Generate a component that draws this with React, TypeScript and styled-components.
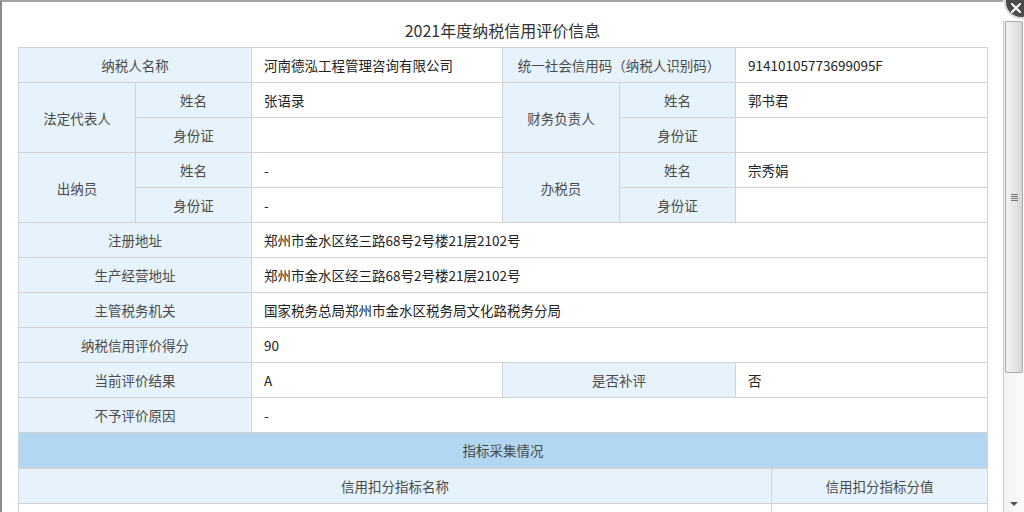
import React from 'react';
import styled, { createGlobalStyle } from 'styled-components';

const Global = createGlobalStyle`
  html, body { margin: 0; padding: 0; background: #fff; }
  body { font-family: "Noto Sans CJK SC", "Noto Sans", sans-serif; color: #333; }
  #root { width: 1024px; height: 512px; }
`;

const Page = styled.div`
  position: relative;
  display: flex;
  width: 1024px;
  height: 512px;
  overflow: hidden;
  background: #fff;
`;

const Frame = styled.div`
  width: 1003px;
  flex: none;
  box-sizing: border-box;
  border-top: 2px solid #a3a3a3;
  border-left: 2px solid #8c8c8c;
  padding-left: 16px;
`;

const Title = styled.div`
  width: 969px;
  height: 45px;
  box-sizing: border-box;
  padding-top: 16px;
  line-height: 24px;
  font-size: 16px;
  text-align: center;
  color: #333;
`;

const Table = styled.table`
  width: 969px;
  border-collapse: collapse;
  table-layout: fixed;
  font-size: 13.5px;
`;

const Cell = styled.td<{ $label?: boolean; $head?: boolean }>`
  height: 35px;
  padding: 0 12px;
  box-sizing: border-box;
  border: 1px solid #d2d2d2;
  vertical-align: middle;
  white-space: nowrap;
  overflow: hidden;
  color: ${(p) => (p.$label || p.$head ? '#4a4a4a' : '#222')};
  text-align: ${(p) => (p.$label || p.$head ? 'center' : 'left')};
  background: ${(p) => (p.$head ? '#b1d7f3' : p.$label ? '#e6f3fc' : '#fff')};
`;

const ScrollCol = styled.div`
  flex: 1;
  display: flex;
  flex-direction: column;
  padding-top: 21px;
  box-sizing: border-box;
  background: #fff;
`;

const Track = styled.div`
  flex: 1;
  display: flex;
  flex-direction: column;
  align-items: stretch;
  border-left: 1px solid #c9c9c9;
  background: linear-gradient(to right, #f3f3f3, #fafafa);
  padding: 0 1px 0 1px;
`;

const Thumb = styled.div`
  height: 352px;
  box-sizing: border-box;
  border: 1px solid #a9a9a9;
  border-radius: 2px;
  background: linear-gradient(to right, #f2f2f2, #e3e3e3 60%, #d6d6d6);
  display: flex;
  align-items: center;
  justify-content: center;
`;

const Grip = styled.div`
  width: 7px;
  height: 7px;
  background: repeating-linear-gradient(to bottom, #777 0 1px, transparent 1px 2px);
`;

const Spacer = styled.div`
  flex: 1;
`;

const ArrowBox = styled.div`
  height: 16px;
  display: flex;
  align-items: center;
  justify-content: center;
`;

const Arrow = styled.div`
  width: 0;
  height: 0;
  border-left: 4px solid transparent;
  border-right: 4px solid transparent;
  border-top: 4px solid #555;
`;

const Close = styled.div`
  position: absolute;
  top: -13px;
  right: -12px;
  width: 30px;
  height: 30px;
  border-radius: 50%;
  background: #4b4b4b;
  box-shadow: 0 0 0 2px #d8d8d8;
  display: flex;
  align-items: center;
  justify-content: center;
`;

const colW = [117, 116, 251, 117, 116, 252];

export default function App() {
  return (
    <Page>
      <Global />
      <Frame>
        <Title>2021年度纳税信用评价信息</Title>
        <Table>
          <colgroup>
            {colW.map((w, i) => (
              <col key={i} style={{ width: w }} />
            ))}
          </colgroup>
          <tbody>
            <tr>
              <Cell $label colSpan={2}>纳税人名称</Cell>
              <Cell>河南德泓工程管理咨询有限公司</Cell>
              <Cell $label colSpan={2}>统一社会信用码（纳税人识别码）</Cell>
              <Cell>91410105773699095F</Cell>
            </tr>
            <tr>
              <Cell $label rowSpan={2}>法定代表人</Cell>
              <Cell $label>姓名</Cell>
              <Cell>张语录</Cell>
              <Cell $label rowSpan={2}>财务负责人</Cell>
              <Cell $label>姓名</Cell>
              <Cell>郭书君</Cell>
            </tr>
            <tr>
              <Cell $label>身份证</Cell>
              <Cell></Cell>
              <Cell $label>身份证</Cell>
              <Cell></Cell>
            </tr>
            <tr>
              <Cell $label rowSpan={2}>出纳员</Cell>
              <Cell $label>姓名</Cell>
              <Cell>-</Cell>
              <Cell $label rowSpan={2}>办税员</Cell>
              <Cell $label>姓名</Cell>
              <Cell>宗秀娟</Cell>
            </tr>
            <tr>
              <Cell $label>身份证</Cell>
              <Cell>-</Cell>
              <Cell $label>身份证</Cell>
              <Cell></Cell>
            </tr>
            <tr>
              <Cell $label colSpan={2}>注册地址</Cell>
              <Cell colSpan={4}>郑州市金水区经三路68号2号楼21层2102号</Cell>
            </tr>
            <tr>
              <Cell $label colSpan={2}>生产经营地址</Cell>
              <Cell colSpan={4}>郑州市金水区经三路68号2号楼21层2102号</Cell>
            </tr>
            <tr>
              <Cell $label colSpan={2}>主管税务机关</Cell>
              <Cell colSpan={4}>国家税务总局郑州市金水区税务局文化路税务分局</Cell>
            </tr>
            <tr>
              <Cell $label colSpan={2}>纳税信用评价得分</Cell>
              <Cell colSpan={4}>90</Cell>
            </tr>
            <tr>
              <Cell $label colSpan={2}>当前评价结果</Cell>
              <Cell>A</Cell>
              <Cell $label colSpan={2}>是否补评</Cell>
              <Cell>否</Cell>
            </tr>
            <tr>
              <Cell $label colSpan={2}>不予评价原因</Cell>
              <Cell colSpan={4}>-</Cell>
            </tr>
            <tr>
              <Cell $head colSpan={6}>指标采集情况</Cell>
            </tr>
          </tbody>
        </Table>
        <Table>
          <colgroup>
            <col style={{ width: 753 }} />
            <col style={{ width: 216 }} />
          </colgroup>
          <tbody>
            <tr>
              <Cell $label>信用扣分指标名称</Cell>
              <Cell $label>信用扣分指标分值</Cell>
            </tr>
            <tr>
              <Cell></Cell>
              <Cell></Cell>
            </tr>
          </tbody>
        </Table>
      </Frame>
      <ScrollCol>
        <Track>
          <Thumb>
            <Grip />
          </Thumb>
          <Spacer />
          <ArrowBox>
            <Arrow />
          </ArrowBox>
        </Track>
      </ScrollCol>
      <Close>
        <svg width="12" height="12" viewBox="0 0 12 12" style={{ marginTop: 12, marginRight: 10 }}>
          <path d="M2 2L10 10M10 2L2 10" stroke="#fff" strokeWidth="2" strokeLinecap="round" />
        </svg>
      </Close>
    </Page>
  );
}
